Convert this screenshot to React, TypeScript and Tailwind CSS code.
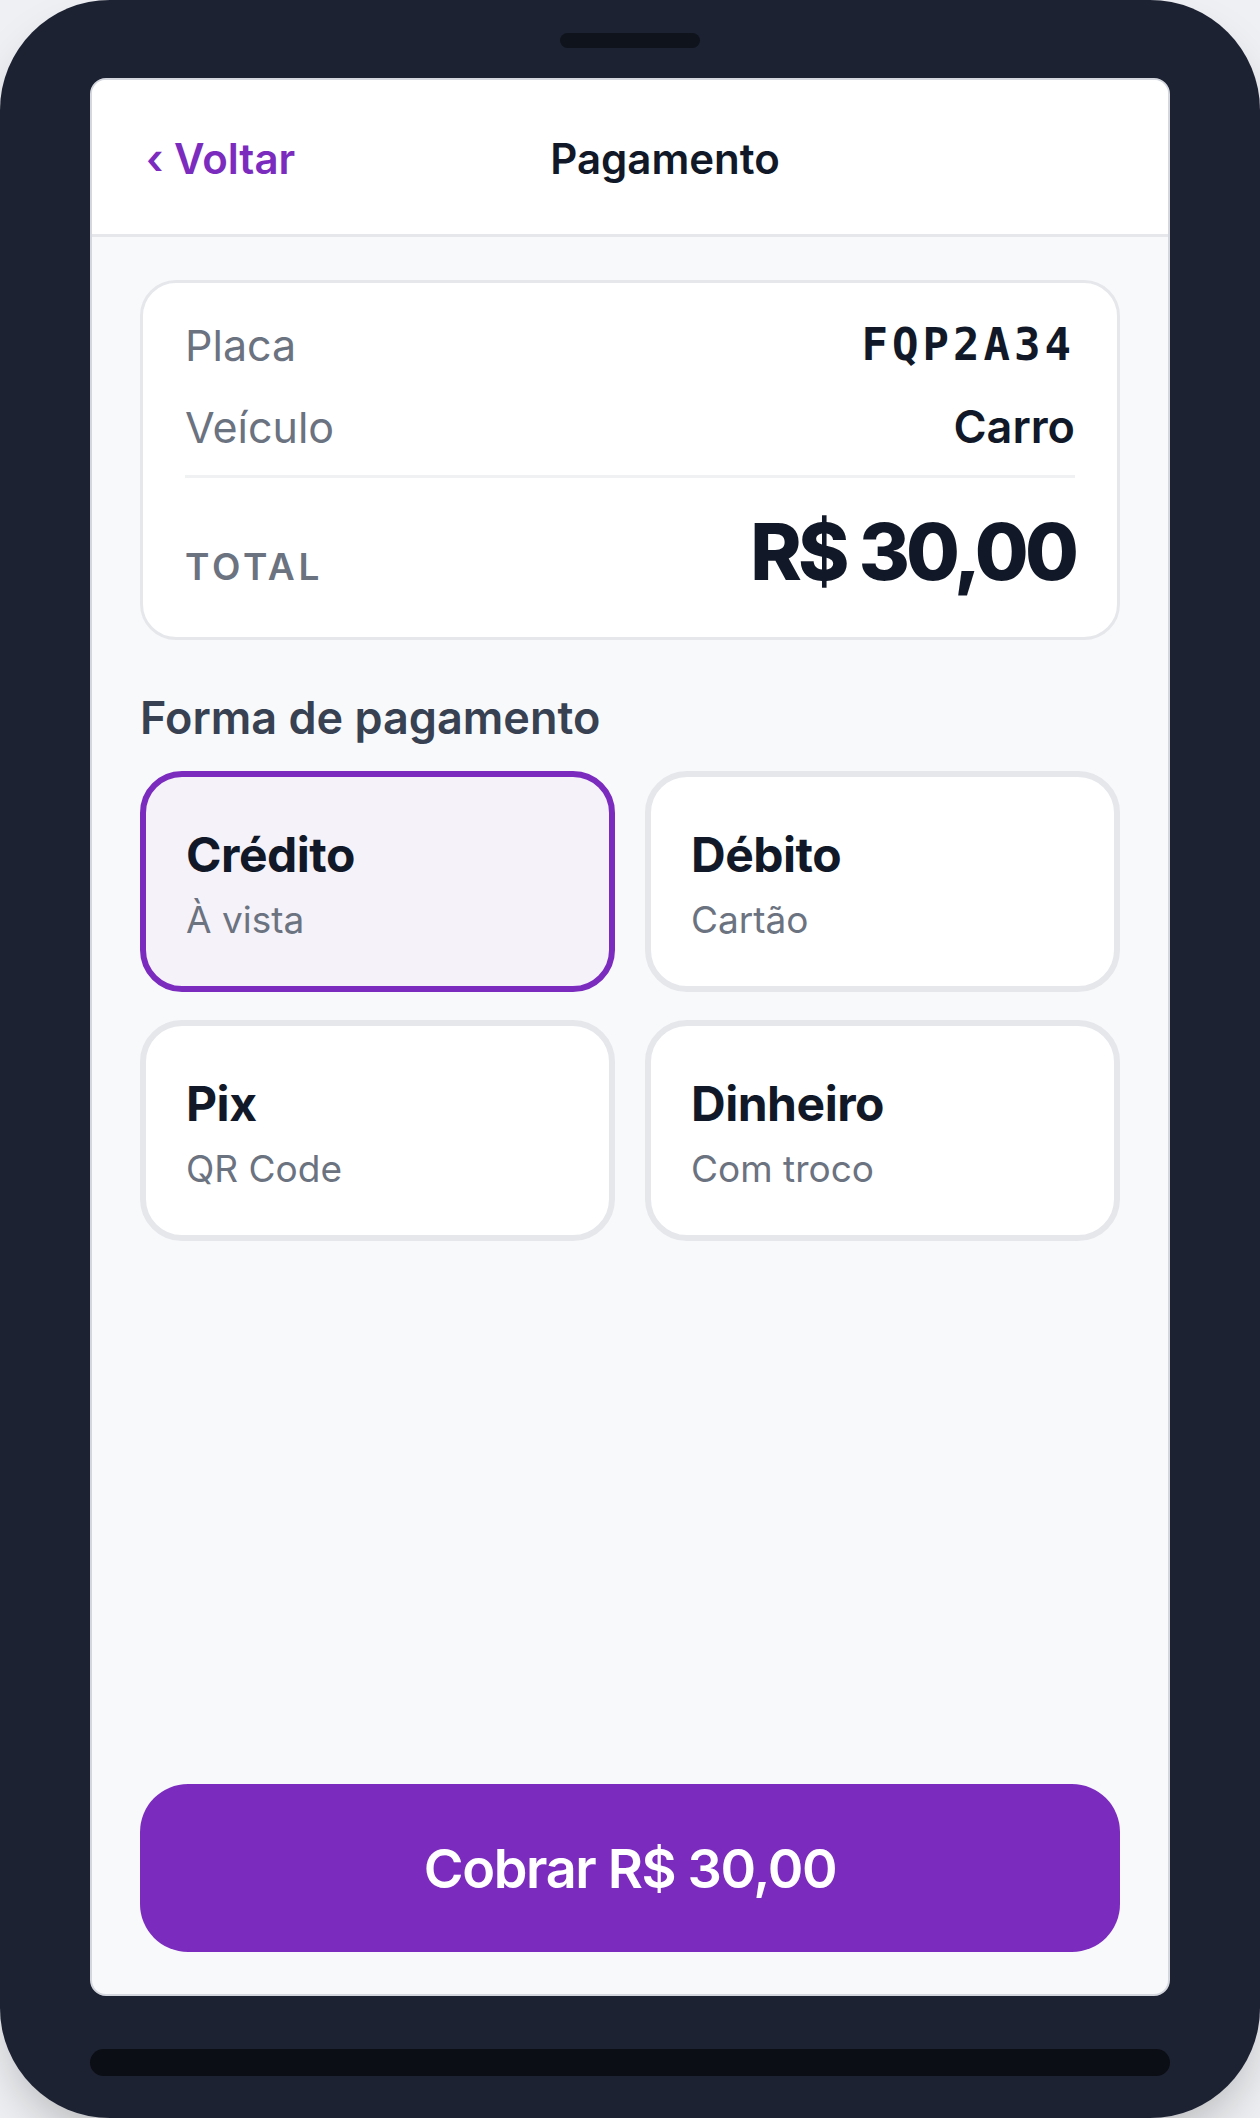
import { clsx } from 'clsx';

const methods = [
  { id: 'credito', title: 'Crédito', sub: 'À vista' },
  { id: 'debito', title: 'Débito', sub: 'Cartão' },
  { id: 'pix', title: 'Pix', sub: 'QR Code' },
  { id: 'dinheiro', title: 'Dinheiro', sub: 'Com troco' },
];

function MethodCard({ title, sub, active }: { title: string; sub: string; active?: boolean }) {
  return (
    <button
      className={clsx(
        'h-[221px] rounded-[42px] border-[6px] px-[40px] pt-[51px] text-left flex flex-col',
        active ? 'border-[#7b2cbf] bg-[#f5f2fa]' : 'border-[#e5e7eb] bg-white'
      )}
    >
      <span className="text-[48px] leading-[54px] font-bold text-[#111827] tracking-[-0.01em]">{title}</span>
      <span className="mt-[14px] text-[37px] leading-[48px] text-[#6b7280]">{sub}</span>
    </button>
  );
}

export default function App() {
  return (
    <div className="w-[1260px] h-[2118px] bg-[#eef0f3] font-['Inter',sans-serif]">
      <div className="w-full h-full rounded-[110px] bg-[#1d2233] px-[90px] flex flex-col shadow-2xl">
        {/* notch */}
        <div className="h-[78px] flex justify-center pt-[33px]">
          <div className="w-[140px] h-[15px] rounded-full bg-[#0f131b]" />
        </div>

        {/* screen */}
        <div className="h-[1918px] rounded-[16px] border-2 border-[#d4d7dd] bg-[#f8f9fb] overflow-hidden flex flex-col">
          <header className="h-[157px] shrink-0 bg-white border-b-[3px] border-[#e5e7eb] pl-[54px] pr-[48px] pt-[4px] flex items-center">
            <button className="text-[42px] font-semibold text-[#7b2cbf] leading-none">‹ Voltar</button>
            <h1 className="ml-[255px] text-[42px] font-semibold text-[#111827] leading-none">Pagamento</h1>
          </header>

          <main className="flex-1 flex flex-col px-[48px] pt-[43px] pb-[42px]">
            {/* resumo */}
            <section className="rounded-[36px] border-[3px] border-[#e5e7eb] bg-white px-[42px] pt-[32px] pb-[25px]">
              <div className="h-[60px] flex items-center justify-between">
                <span className="text-[43px] text-[#6b7280]">Placa</span>
                <span className="font-['DejaVu_Sans_Mono',monospace] font-bold text-[44px] tracking-[4px] text-[#111827]">
                  FQP2A34
                </span>
              </div>
              <div className="mt-[22px] h-[60px] flex items-center justify-between">
                <span className="text-[43px] text-[#6b7280]">Veículo</span>
                <span className="text-[45px] font-semibold text-[#111827]">Carro</span>
              </div>
              <div className="mt-[18px] h-[3px] bg-[#f0f1f3]" />
              <div className="mt-[29px] flex items-baseline justify-between leading-[90px]">
                <span className="text-[37px] font-semibold tracking-[0.1em] text-[#6b7280]">TOTAL</span>
                <span className="text-[78px] font-extrabold tracking-[-0.05em] text-[#111827]">R$ 30,00</span>
              </div>
            </section>

            <h2 className="mt-[53px] text-[45px] leading-[50px] font-semibold text-[#374151]">Forma de pagamento</h2>

            <div className="mt-[28px] grid grid-cols-2 gap-x-[30px] gap-y-[28px]">
              {methods.map((m) => (
                <MethodCard key={m.id} title={m.title} sub={m.sub} active={m.id === 'credito'} />
              ))}
            </div>

            <button className="mt-auto h-[168px] rounded-[48px] bg-[#7b2cbf] text-white text-[54px] font-semibold tracking-tight">
              Cobrar R$ 30,00
            </button>
          </main>
        </div>

        {/* home bar */}
        <div className="pt-[53px]">
          <div className="h-[27px] rounded-full bg-[#0b0e14]" />
        </div>
      </div>
    </div>
  );
}
